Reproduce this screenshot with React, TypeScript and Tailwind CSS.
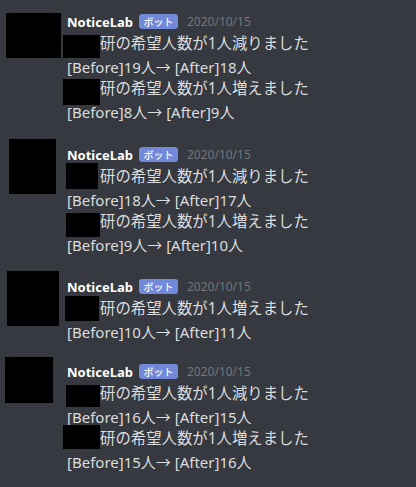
import React from 'react';

interface Redact {
  ml: string;
  cls: string;
}

interface Line {
  text: string;
  redact?: Redact;
}

interface Message {
  mt: string;
  avatar: string;
  lines: Line[];
}

const MESSAGES: Message[] = [
  {
    mt: 'mt-[11px]',
    avatar: 'ml-[6px] mt-[2px] w-[55px] h-[45px]',
    lines: [
      { text: '研の希望人数が1人減りました', redact: { ml: 'ml-[-4px] w-[37px]', cls: 'mt-[2px] h-[23px] mb-[-3px]' } },
      { text: '[Before]19人→ [After]18人' },
      { text: '研の希望人数が1人増えました', redact: { ml: 'ml-[-4px] w-[37px]', cls: 'mt-[1px] h-[26px] mb-[-5px]' } },
      { text: '[Before]8人→ [After]9人' },
    ],
  },
  {
    mt: 'mt-[21px]',
    avatar: 'ml-[9px] mt-[-5px] w-[47px] h-[55px]',
    lines: [
      { text: '研の希望人数が1人減りました', redact: { ml: 'ml-[-1px] w-[32px]', cls: 'mt-[-3px] h-[26px] mb-[-1px]' } },
      { text: '[Before]18人→ [After]17人' },
      { text: '研の希望人数が1人増えました', redact: { ml: 'ml-[-1px] w-[34px]', cls: 'mt-[2px] h-[24px] mb-[-4px]' } },
      { text: '[Before]9人→ [After]10人' },
    ],
  },
  {
    mt: 'mt-[20px]',
    avatar: 'ml-[7px] mt-[-5px] w-[52px] h-[55px]',
    lines: [
      { text: '研の希望人数が1人増えました', redact: { ml: 'ml-[-2px] w-[34px]', cls: 'mt-[-2px] h-[25px] mb-[-1px]' } },
      { text: '[Before]10人→ [After]11人' },
    ],
  },
  {
    mt: 'mt-[18px]',
    avatar: 'ml-[5px] mt-[-4px] w-[48px] h-[46px]',
    lines: [
      { text: '研の希望人数が1人減りました', redact: { ml: 'ml-[-1px] w-[34px]', cls: 'mt-[2px] h-[22px] mb-[-2px]' } },
      { text: '[Before]16人→ [After]15人' },
      { text: '研の希望人数が1人増えました', redact: { ml: 'ml-[-4px] w-[37px]', cls: 'mt-[-3px] h-[24px] mb-[1px]' } },
      { text: '[Before]15人→ [After]16人' },
    ],
  },
];

const FONT = "font-['Noto_Sans','Noto_Sans_CJK_JP',sans-serif]";

export default function App() {
  return (
    <div className={`w-[416px] h-[487px] overflow-hidden bg-[#36393f] ${FONT}`}>
      {MESSAGES.map((m, i) => (
        <div key={i} className={`flex ${m.mt}`}>
          {/* avatar (redacted) */}
          <div className="w-[67px] shrink-0">
            <div className={`bg-black ${m.avatar}`} />
          </div>
          <div className="flex flex-col">
            <div className="flex h-[22px] items-center">
              <span className="text-[13px] leading-[22px] font-bold text-white">NoticeLab</span>
              <span className="ml-[6px] mt-[-1px] flex h-[15px] w-[39px] items-center justify-center rounded-[3px] bg-[#7289da] text-[10px] font-medium leading-none text-white">
                ボット
              </span>
              <span className="ml-[9px] text-[12px] leading-[22px] text-[#72767d]">2020/10/15</span>
            </div>
            {m.lines.map((l, j) =>
              l.redact ? (
                <div key={j} className="flex items-start">
                  <div className="w-[33px] shrink-0">
                    <div className={`bg-black ${l.redact.ml} ${l.redact.cls}`} />
                  </div>
                  <span className="text-[15.4px] leading-[22.5px] text-[#dcddde] whitespace-nowrap">{l.text}</span>
                </div>
              ) : (
                <div key={j} className="text-[15px] leading-[22.5px] text-[#dcddde] whitespace-nowrap">
                  {l.text}
                </div>
              )
            )}
          </div>
        </div>
      ))}
    </div>
  );
}
